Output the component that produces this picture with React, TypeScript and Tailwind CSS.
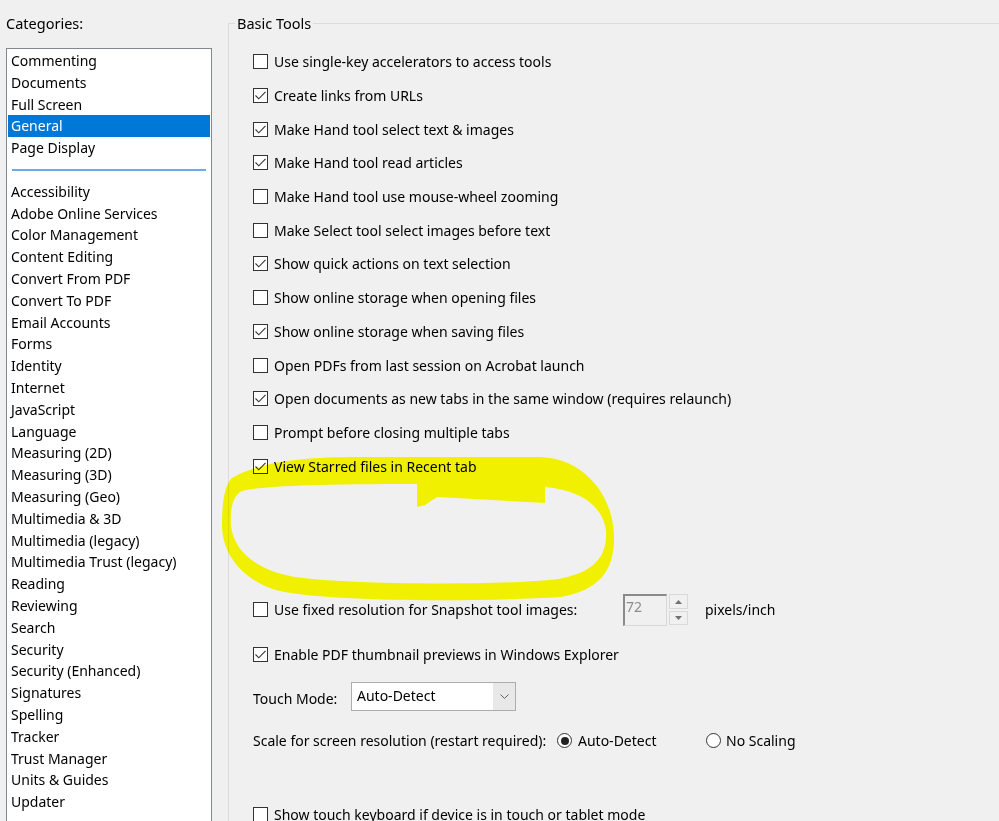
import React from 'react';

const font = { fontFamily: '"Noto Sans", "Open Sans", sans-serif' };

const topCats = ['Commenting', 'Documents', 'Full Screen', 'General', 'Page Display'];
const moreCats = [
  'Accessibility', 'Adobe Online Services', 'Color Management', 'Content Editing', 'Convert From PDF',
  'Convert To PDF', 'Email Accounts', 'Forms', 'Identity', 'Internet', 'JavaScript', 'Language',
  'Measuring (2D)', 'Measuring (3D)', 'Measuring (Geo)', 'Multimedia & 3D', 'Multimedia (legacy)',
  'Multimedia Trust (legacy)', 'Reading', 'Reviewing', 'Search', 'Security', 'Security (Enhanced)',
  'Signatures', 'Spelling', 'Tracker', 'Trust Manager', 'Units & Guides', 'Updater',
];

const options: [string, boolean][] = [
  ['Use single-key accelerators to access tools', false],
  ['Create links from URLs', true],
  ['Make Hand tool select text & images', true],
  ['Make Hand tool read articles', true],
  ['Make Hand tool use mouse-wheel zooming', false],
  ['Make Select tool select images before text', false],
  ['Show quick actions on text selection', true],
  ['Show online storage when opening files', false],
  ['Show online storage when saving files', true],
  ['Open PDFs from last session on Acrobat launch', false],
  ['Open documents as new tabs in the same window (requires relaunch)', true],
  ['Prompt before closing multiple tabs', false],
  ['View Starred files in Recent tab', true],
];

const Checkbox = ({ checked }: { checked: boolean }) => (
  <span className="w-[15px] h-[15px] shrink-0 border border-[#333] bg-white flex items-center justify-center">
    {checked && (
      <svg width="13" height="13" viewBox="0 0 13 13">
        <path d="M1.5 6.5 L4.8 9.8 L11.5 2.8" fill="none" stroke="#333" strokeWidth="1.1" />
      </svg>
    )}
  </span>
);

const Radio = ({ checked }: { checked: boolean }) => (
  <span className="w-[15px] h-[15px] shrink-0 rounded-full border border-[#333] bg-white flex items-center justify-center">
    {checked && <span className="w-[8px] h-[8px] rounded-full bg-[#222]" />}
  </span>
);

const CheckRow = ({ label, checked }: { label: string; checked: boolean }) => (
  <div className="h-[33.7px] flex items-center gap-[6px]">
    <Checkbox checked={checked} />
    <span>{label}</span>
  </div>
);

export default function App() {
  return (
    <div className="w-[999px] h-[821px] overflow-hidden bg-[#f0f0f0] text-black text-[14px] relative flex" style={font}>
      {/* Categories */}
      <div className="w-[228px] shrink-0 pl-[6px] pt-[12px]">
        <div className="h-[22px] leading-[22px] text-[14.5px]">Categories:</div>
        <div className="mt-[14px] w-[206px] h-[800px] bg-white border border-[#828790] p-px">
          {topCats.map((c) => (
            <div
              key={c}
              className={`h-[21.8px] leading-[21.8px] pl-[3px] ${c === 'General' ? 'bg-[#0078d7] text-white' : ''}`}
            >
              {c}
            </div>
          ))}
          <div className="h-[21.8px] flex items-center pl-[4px]">
            <div className="w-[194px] h-[2px] bg-[#68acec]" />
          </div>
          {moreCats.map((c) => (
            <div key={c} className="h-[21.8px] leading-[21.8px] pl-[3px]">
              {c}
            </div>
          ))}
        </div>
      </div>

      {/* Basic Tools group */}
      <div className="flex-1 pt-[23px]">
        <div className="relative h-[900px] border-l border-t border-[#dcdcdc] pl-[24px] pt-[21px]">
          <span className="absolute left-[6px] top-[-12px] px-[2px] bg-[#f0f0f0] leading-[22px] text-[14.5px]">Basic Tools</span>

          {options.map(([label, checked]) => (
            <CheckRow key={label} label={label} checked={checked} />
          ))}

          <div className="h-[33.7px] mt-[110px] flex items-center">
            <div className="w-[370px] flex items-center gap-[6px]">
              <Checkbox checked={false} />
              <span>Use fixed resolution for Snapshot tool images:</span>
            </div>
            <div className="w-[44px] h-[32px] border-t-2 border-l-2 border-[#8a8a8a] border-r border-b border-r-[#d8d8d8] border-b-[#d8d8d8] pl-[1px] leading-[22px] text-[#8c8c8c]">
              72
            </div>
            <div className="ml-[2px] w-[19px] h-[31px] flex flex-col gap-[2px]">
              <div className="flex-1 border border-[#d9d9d9] flex items-center justify-center">
                <svg width="7" height="4" viewBox="0 0 7 4"><path d="M0 4 L3.5 0 L7 4 Z" fill="#707070" /></svg>
              </div>
              <div className="flex-1 border border-[#d9d9d9] flex items-center justify-center">
                <svg width="7" height="4" viewBox="0 0 7 4"><path d="M0 0 L3.5 4 L7 0 Z" fill="#707070" /></svg>
              </div>
            </div>
            <span className="ml-[17px]">pixels/inch</span>
          </div>

          <div className="h-[44px] mt-[6px] flex items-center gap-[6px]">
            <Checkbox checked={true} />
            <span>Enable PDF thumbnail previews in Windows Explorer</span>
          </div>

          <div className="h-[40px] flex items-center">
            <span className="w-[98px] pt-[3px]">Touch Mode:</span>
            <div className="w-[165px] h-[29px] border border-[#adadad] bg-white flex">
              <span className="flex-1 pl-[5px] leading-[26px]">Auto-Detect</span>
              <div className="w-[22px] bg-[#e8e8e8] flex items-center justify-center">
                <svg width="9" height="5" viewBox="0 0 9 5"><path d="M0.5 0.5 L4.5 4.5 L8.5 0.5" fill="none" stroke="#606060" strokeWidth="1" /></svg>
              </div>
            </div>
          </div>

          <div className="h-[48px] flex items-center">
            <span className="w-[304px]">Scale for screen resolution (restart required):</span>
            <div className="w-[149px] flex items-center gap-[6px]">
              <Radio checked={true} />
              <span>Auto-Detect</span>
            </div>
            <div className="flex items-center gap-[5px]">
              <Radio checked={false} />
              <span>No Scaling</span>
            </div>
          </div>

          <div className="h-[33.7px] mt-[33px] flex items-center gap-[6px]">
            <Checkbox checked={false} />
            <span>Show touch keyboard if device is in touch or tablet mode</span>
          </div>
        </div>
      </div>

      {/* hand-drawn yellow highlight */}
      <svg className="absolute inset-0 pointer-events-none mix-blend-multiply" width="999" height="821" viewBox="0 0 999 821">
        <path
          fillRule="evenodd"
          fill="#ffff00"
          d="M232 478 C260 462 300 457 360 457 L540 457 C580 458 612 490 614 535 C615 570 600 590 560 597 C480 602 330 602 280 591 C245 582 222 556 222 525 C222 500 225 485 232 478 Z
             M240 492 C250 487 300 484 417 484 L417 507 L425 505 L437 497 L545 503 L545 487 C580 490 602 505 606 530 C608 560 590 575 550 580 C480 586 330 584 290 576 C255 569 233 550 231 525 C230 505 234 497 240 492 Z"
        />
      </svg>
    </div>
  );
}
